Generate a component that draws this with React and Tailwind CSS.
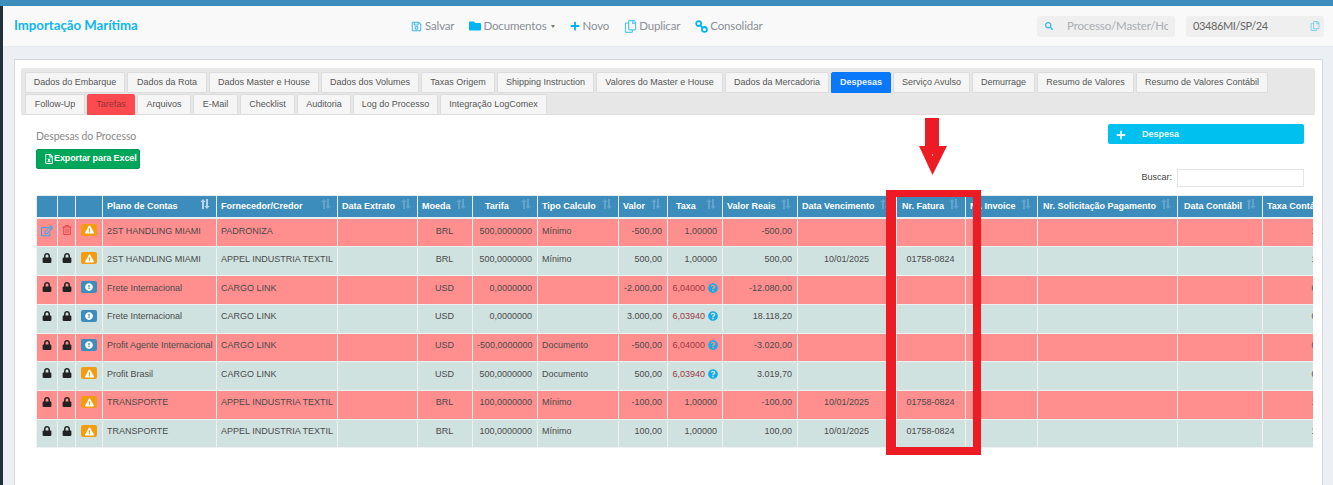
import React from "react";
import { FaLock, FaRegEdit, FaRegTrashAlt, FaExclamationTriangle, FaExclamationCircle, FaQuestionCircle, FaRegSave, FaFolder, FaPlus, FaRegCopy, FaSearch, FaRegFileExcel } from "react-icons/fa";

const tabs1 = [
  ["Dados do Embarque", "w-[100px]"], ["Dados da Rota", "w-[80px]"], ["Dados Master e House", "w-[110px]"], ["Dados dos Volumes", "w-[98px]"],
  ["Taxas Origem", "w-[74px]"], ["Shipping Instruction", "w-[97px]"], ["Valores do Master e House", "w-[127px]"], ["Dados da Mercadoria", "w-[104px]"],
  ["Despesas", "w-[60px]", "active"], ["Serviço Avulso", "w-[77px]"], ["Demurrage", "w-[63px]"], ["Resumo de Valores", "w-[97px]"], ["Resumo de Valores Contábil", "w-[132px]"],
];
const tabs2 = [
  ["Follow-Up", "w-[60px]"], ["Tarefas", "w-[48px]", "red"], ["Arquivos", "w-[54px]"], ["E-Mail", "w-[45px]"], ["Checklist", "w-[55px]"],
  ["Auditoria", "w-[54px]"], ["Log do Processo", "w-[85px]"], ["Integração LogComex", "w-[107px]"],
];

const cols = [
  ["", "w-[21px]"], ["", "w-[18px]"], ["", "w-[27px]"],
  ["Plano de Contas", "w-[114px]", "pl-[4px]", "sorted"], ["Fornecedor/Credor", "w-[121px]", "pl-[4px]"], ["Data Extrato", "w-[80px]", "pl-[4px]"],
  ["Moeda", "w-[55px]", "pl-[4px]"], ["Tarifa", "w-[65px]", "pl-[12px]"], ["Tipo Calculo", "w-[81px]", "pl-[4px]"], ["Valor", "w-[49px]", "pl-[4px]"],
  ["Taxa", "w-[55px]", "pl-[8px]"], ["Valor Reais", "w-[75px]", "pl-[4px]"], ["Data Vencimento", "w-[99px]", "pl-[4px]"], ["Nr. Fatura", "w-[69px]", "pl-[5px]"],
  ["Nr. Invoice", "w-[72px]", "pl-[4px]"], ["Nr. Solicitação Pagamento", "w-[140px]", "pl-[5px]"], ["Data Contábil", "w-[85px]", "pl-[6px]"], ["Taxa Contábil", "w-[87px]", "pl-[4px]"],
];

const rows = [
  { h: "h-[29px]", pt: "pt-[6px]", red: 1, edit: 1, b: "w", plano: "2ST HANDLING MIAMI", forn: "PADRONIZA", moeda: "BRL", tarifa: "500,0000000", tipo: "Mínimo", valor: "-500,00", taxa: "1,00000", reais: "-500,00", venc: "", fat: "", tc: "1,00000" },
  { h: "h-[29px]", pt: "pt-[6px]", b: "w", plano: "2ST HANDLING MIAMI", forn: "APPEL INDUSTRIA TEXTIL", moeda: "BRL", tarifa: "500,0000000", tipo: "Mínimo", valor: "500,00", taxa: "1,00000", reais: "500,00", venc: "10/01/2025", fat: "01758-0824", tc: "1,00000" },
  { h: "h-[29px]", pt: "pt-[6px]", red: 1, b: "i", plano: "Frete Internacional", forn: "CARGO LINK", moeda: "USD", tarifa: "0,0000000", tipo: "", valor: "-2.000,00", taxa: "6,04000", q: 1, reais: "-12.080,00", venc: "", fat: "", tc: "0,00000" },
  { h: "h-[29px]", pt: "pt-[5px]", b: "i", plano: "Frete Internacional", forn: "CARGO LINK", moeda: "USD", tarifa: "0,0000000", tipo: "", valor: "3.000,00", taxa: "6,03940", q: 1, reais: "18.118,20", venc: "", fat: "", tc: "0,00000" },
  { h: "h-[28px]", pt: "pt-[5px]", red: 1, b: "i", plano: "Profit Agente Internacional", forn: "CARGO LINK", moeda: "USD", tarifa: "-500,0000000", tipo: "Documento", valor: "-500,00", taxa: "6,04000", q: 1, reais: "-3.020,00", venc: "", fat: "", tc: "0,00000" },
  { h: "h-[29px]", pt: "pt-[6px]", b: "w", plano: "Profit Brasil", forn: "CARGO LINK", moeda: "USD", tarifa: "500,0000000", tipo: "Documento", valor: "500,00", taxa: "6,03940", q: 1, reais: "3.019,70", venc: "", fat: "", tc: "0,00000" },
  { h: "h-[29px]", pt: "pt-[5px]", red: 1, b: "w", plano: "TRANSPORTE", forn: "APPEL INDUSTRIA TEXTIL", moeda: "BRL", tarifa: "100,0000000", tipo: "Mínimo", valor: "-100,00", taxa: "1,00000", reais: "-100,00", venc: "10/01/2025", fat: "01758-0824", tc: "1,00000" },
  { h: "h-[28px]", pt: "pt-[5px]", b: "w", plano: "TRANSPORTE", forn: "APPEL INDUSTRIA TEXTIL", moeda: "BRL", tarifa: "100,0000000", tipo: "Mínimo", valor: "100,00", taxa: "1,00000", reais: "100,00", venc: "10/01/2025", fat: "01758-0824", tc: "1,00000" },
];

function SortIcon({ sorted }) {
  return (
    <svg viewBox="0 0 10 10" className={"absolute right-[6px] top-[3px] h-[10px] w-[10px] " + (sorted ? "text-[#b9d6e8]" : "text-[#64a4cc]")} fill="currentColor">
      <path d="M2 10V3H.4L3 0l2.6 3H4v7zM6 0h2v7h1.6L7 10 4.4 7H6z" />
    </svg>
  );
}

function LinkIcon() {
  return (
    <svg viewBox="0 0 13 13" className="h-[13px] w-[13px]" fill="none" stroke="#00b5ef" strokeWidth="1.8">
      <circle cx="3.6" cy="3.6" r="2.4" />
      <circle cx="9.4" cy="9.4" r="2.4" />
      <path d="M5.4 5.4l2.2 2.2" />
    </svg>
  );
}

function Tab({ t }) {
  const [label, w, kind] = t;
  const cls =
    kind === "active" ? "bg-[#0a78fb] text-[#e8f2ff] border-[#0a78fb] font-bold" :
    kind === "red" ? "bg-[#ff4b4f] text-[#8c3436] border-[#ff4b4f]" :
    "bg-[#f5f5f5] text-[#555] border-[#dcdcdc]";
  return <div className={`flex h-[21px] items-center justify-center whitespace-nowrap rounded-t-[2px] border ${cls} ${w}`}>{label}</div>;
}

function Badge({ b }) {
  if (b === "w")
    return <span className="mx-auto flex h-[12px] w-[16px] items-center justify-center rounded-[2px] bg-[#f39c12] text-white"><FaExclamationTriangle size={9} /></span>;
  return <span className="mx-auto flex h-[12px] w-[16px] items-center justify-center rounded-[2px] bg-[#3c8dbc] text-white"><FaExclamationCircle size={8} /></span>;
}

function NavItem({ icon, children }) {
  return <span className="flex items-center gap-[2px]">{icon}{children}</span>;
}

export default function App() {
  const tdBase = "border border-[#eef2f1] align-top overflow-hidden whitespace-nowrap";
  return (
    <div className="relative flex h-[485px] w-[1333px] flex-col overflow-hidden bg-[#ecf0f5] font-['Liberation_Sans',sans-serif] text-[9px]">
      <div className="h-[6px] shrink-0 bg-[#3c8dbc]" />
      <div className="flex min-h-0 flex-1">
        <div className="w-[3px] shrink-0 bg-[#22303a]" />
        <div className="flex min-w-0 flex-1 flex-col">
          <header className="flex h-[41px] shrink-0 items-center border-b border-[#e8ebef] bg-[#f9f9f9] pl-[11px] pr-[9px] font-['Lato',sans-serif]">
            <div className="w-[397px] text-[13.2px] font-bold text-[#0fb6ee]">Importação Marítima</div>
            <nav className="flex items-center gap-[15px] text-[11.5px] tracking-[-0.15px] text-[#8a8f96]">
              <NavItem icon={<FaRegSave size={11} className="mr-[1px] text-[#39b8ee]" />}>Salvar</NavItem>
              <NavItem icon={<FaFolder size={12} className="text-[#00b5ef]" />}>
                Documentos
                <span className="ml-[3px] h-0 w-0 border-x-[2.5px] border-t-[3px] border-x-transparent border-t-[#777]" />
              </NavItem>
              <NavItem icon={<FaPlus size={10} className="text-[#00b5ef]" />}>Novo</NavItem>
              <NavItem icon={<FaRegCopy size={13} className="text-[#5cc7ef]" />}>Duplicar</NavItem>
              <NavItem icon={<LinkIcon />}>Consolidar</NavItem>
            </nav>
            <div className="ml-auto flex h-[21px] w-[138px] items-center overflow-hidden rounded-[3px] bg-[#efefef] pl-[8px] text-[11.5px] tracking-[-0.15px] text-[#a9adb2]">
              <FaSearch size={8} className="mr-[14px] shrink-0 text-[#2fb7e8]" />
              <span className="w-[101px] shrink-0 overflow-hidden whitespace-nowrap">Processo/Master/House</span>
            </div>
            <div className="ml-[11px] flex h-[21px] w-[138px] items-center justify-between rounded-[3px] bg-[#efefef] pl-[7px] pr-[4px] text-[11px] tracking-[-0.4px] text-[#666]">
              <span>03486MI/SP/24</span>
              <FaRegCopy size={10} className="text-[#7fd0ef]" />
            </div>
          </header>

          <main className="min-h-0 flex-1 pl-[11px] pr-[10px] pt-[12px]">
            <section className="h-full border border-b-0 border-[#d6d8dc] bg-white pl-[6px] pr-[7px] pt-[8px]">
              <div className="h-[47px] rounded-[2px] border-b border-[#dedede] bg-[#e7e7e7] pl-[4px] pt-[4px] pr-[4px]">
                <div className="flex gap-[2px]">{tabs1.map((t) => <Tab key={t[0]} t={t} />)}</div>
                <div className="mt-[1px] flex gap-[2px]">{tabs2.map((t) => <Tab key={t[0]} t={t} />)}</div>
              </div>

              <div className="flex justify-between pl-[15px] pr-[11px] pt-[9px]">
                <div>
                  <div className="pt-[5px] font-['Lato',sans-serif] text-[10.5px] leading-[14px] tracking-[-0.1px] text-[#8a8a8a]">Despesas do Processo</div>
                  <button className="mt-[6px] flex h-[20px] w-[104px] items-center whitespace-nowrap rounded-[2px] border border-[#019a54] bg-[#00a65a] pl-[7px] font-bold tracking-[-0.1px] text-white">
                    <FaRegFileExcel size={10} className="shrink-0" />Exportar para Excel
                  </button>
                </div>
                <div className="w-[196px]">
                  <button className="flex h-[20px] w-full items-center rounded-[2px] bg-[#00c0ef] pl-[8px] pt-[1px] font-bold text-[#eafaff]">
                    <FaPlus size={10} className="mr-[16px]" />Despesa
                  </button>
                  <div className="mt-[25px] flex items-center justify-end gap-[5px] text-[#444]">
                    <span>Buscar:</span>
                    <input className="h-[18px] w-[127px] border border-[#e3e3e8] bg-white" />
                  </div>
                </div>
              </div>

              <div className="ml-[15px] mt-[8px] w-[1277px] overflow-hidden">
                <table className="w-[1313px] table-fixed border-collapse text-[#4a4a4a]">
                  <colgroup>{cols.map((c, i) => <col key={i} className={c[1]} />)}</colgroup>
                  <thead>
                    <tr className="h-[22px] bg-[#3c8dbc] text-left font-bold text-white">
                      {cols.map((c, i) => (
                        <th key={i} className={`relative overflow-hidden whitespace-nowrap border border-b-2 border-[#e6eef3] ${c[2] || ""}`}>
                          {c[0]}
                          {c[0] && <SortIcon sorted={c[3]} />}
                        </th>
                      ))}
                    </tr>
                  </thead>
                  <tbody>
                    {rows.map((r, i) => {
                      const td = `${tdBase} ${r.pt} pl-[4px] pr-[5px]`;
                      return (
                        <tr key={i} className={`${r.h} ${r.red ? "bg-[#ff8f8f]" : "bg-[#cfe2e0]"}`}>
                          <td className="border border-[#eef2f1] pt-[6px] align-top">
                            {r.edit ? <FaRegEdit size={12} className="mx-auto text-[#2aa8ef]" /> : <FaLock size={10} className="mx-auto text-[#222]" />}
                          </td>
                          <td className="border border-[#eef2f1] pt-[6px] align-top">
                            {r.edit ? <FaRegTrashAlt size={10} className="mx-auto text-[#e04848]" /> : <FaLock size={10} className="mx-auto text-[#222]" />}
                          </td>
                          <td className="border border-[#eef2f1] pt-[5px] align-top"><Badge b={r.b} /></td>
                          <td className={td}>{r.plano}</td>
                          <td className={td}>{r.forn}</td>
                          <td className={td}></td>
                          <td className={td + " text-center"}>{r.moeda}</td>
                          <td className={td + " text-right"}>{r.tarifa}</td>
                          <td className={td}>{r.tipo}</td>
                          <td className={td + " text-right"}>{r.valor}</td>
                          <td className={td + " text-right"}>
                            {r.q ? (
                              <span className="-mr-[1px] inline-flex items-center gap-[3px] text-[#a03844]">
                                {r.taxa}<FaQuestionCircle size={10} className="-mt-[2px] text-[#12ace6]" />
                              </span>
                            ) : r.taxa}
                          </td>
                          <td className={td + " text-right"}>{r.reais}</td>
                          <td className={td + " text-center"}>{r.venc}</td>
                          <td className={td + " text-center"}>{r.fat}</td>
                          <td className={td}></td>
                          <td className={td}></td>
                          <td className={td}></td>
                          <td className={td + " text-right"}>{r.tc}</td>
                        </tr>
                      );
                    })}
                  </tbody>
                </table>
              </div>
            </section>
          </main>
        </div>
      </div>

      {/* Red annotation drawn over the page */}
      <div className="absolute left-[886px] top-[190px] h-[265px] w-[95px] border-y-[8px] border-l-[10px] border-r-[8px] border-t-[7px] border-[#ed1c24]" />
      <svg className="absolute left-[918px] top-[118px] h-[58px] w-[30px]" viewBox="0 0 30 58">
        <path d="M7 0h14v28h8L14.500 57 1 28h6z" fill="#ed1c24" />
        <circle cx="14.500" cy="37" r="0.7" fill="#fff" />
      </svg>
    </div>
  );
}
